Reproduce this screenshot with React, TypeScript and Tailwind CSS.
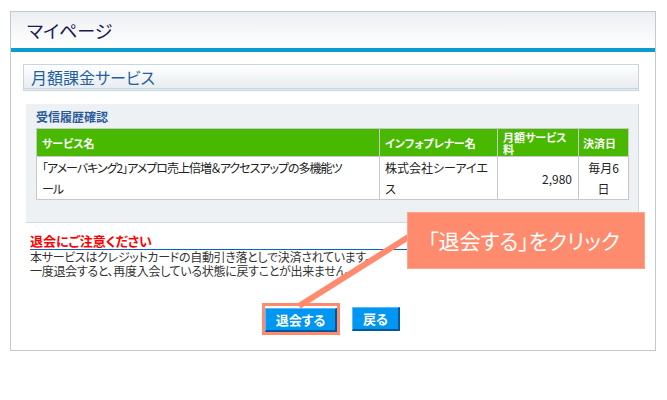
import React from 'react';

const jp = "[font-family:'Noto_Sans_CJK_JP',sans-serif] [font-feature-settings:'palt']";

const App: React.FC = () => {
  return (
    <div className={`relative w-[667px] h-[400px] bg-white overflow-hidden ${jp}`}>
      <div className="ml-[10px] mt-[11px] w-[646px] h-[340px] border border-[#c3c8cd]">
        {/* page title */}
        <div className="h-[36px] flex items-center pl-[16px] bg-gradient-to-b from-[#eceff2] to-white">
          <span className="text-[18px] text-[#1a1a50]">マイページ</span>
        </div>
        <div className="h-[4px] bg-[#0a9ccf]" />

        <div className="pl-[12px] pr-[16px] pt-[12px]">
          {/* section heading */}
          <div className="h-[27px] border border-[#c6d6e0] bg-gradient-to-b from-white to-[#e6ebef] flex flex-col">
            <div className="flex-1 flex items-center pl-[7px] text-[16px] text-[#1f5f9f] leading-none">
              月額課金サービス
            </div>
            <div className="h-[1px] bg-[#c6d6e0] mb-[1px]" />
          </div>

          {/* history box */}
          <div className="ml-[3px] mt-[13px] bg-[#edf1f4] border-r border-b border-[#d3d8dc] pl-[10px] pr-[11px] pt-[6px] pb-[22px]">
            <div className="text-[12px] font-bold text-[#2a5a9a] leading-[14px] mb-[4px]">受信履歴確認</div>
            <table className="w-[592px] border-collapse table-fixed text-[12px] text-[#222]">
              <colgroup>
                <col className="w-[343px]" />
                <col className="w-[118px]" />
                <col className="w-[81px]" />
                <col className="w-[50px]" />
              </colgroup>
              <thead>
                <tr className="h-[28px] bg-[#48b800] text-white text-[11px] font-bold leading-[12px]">
                  <th className="border border-[#c8c8c8] text-left px-[5px] font-bold">サービス名</th>
                  <th className="border border-[#c8c8c8] text-left px-[5px] font-bold">インフォプレナー名</th>
                  <th className="border border-[#c8c8c8] text-left px-[5px] align-top pt-[2px] font-bold">月額サービス料</th>
                  <th className="border border-[#c8c8c8] text-left px-[4px] font-bold">決済日</th>
                </tr>
              </thead>
              <tbody className="bg-white leading-[21px]">
                <tr className="h-[41px]">
                  <td className="border border-[#c8c8c8] px-[5px] tracking-[-1px]">
                    「アメーバキング2」アメプロ売上倍増＆アクセスアップの多機能ツ<br />ール
                  </td>
                  <td className="border border-[#c8c8c8] px-[5px]">
                    株式会社シーアイエ<br />ス
                  </td>
                  <td className="border border-[#c8c8c8] px-[6px] text-right">2,980</td>
                  <td className="border border-[#c8c8c8] text-center">
                    毎月6<br />日
                  </td>
                </tr>
              </tbody>
            </table>
          </div>

          {/* notice */}
          <div className="ml-[7px] mt-[11px]">
            <div className="text-[13px] font-bold text-[#ff0000] leading-[14px] border-b border-[#1060c0] pb-[1px]">
              退会にご注意ください
            </div>
            <div className="text-[12px] text-[#333] leading-[14px] tracking-[-0.3px]">
              <p>本サービスはクレジットカードの自動引き落としで決済されています。</p>
              <p>一度退会すると、再度入会している状態に戻すことが出来ません。</p>
            </div>
          </div>

          {/* buttons */}
          <div className="mt-[25px] flex justify-center items-center gap-[12px]">
            <div className="border-[3px] border-[#ff8a6e]">
              <button className="w-[72px] h-[24px] bg-[#0096f2] text-white text-[13px] font-bold border-t border-l border-[#5ab8ff] border-r-2 border-b-2 border-r-[#00599a] border-b-[#00599a]">
                退会する
              </button>
            </div>
            <button className="w-[48px] h-[24px] bg-[#0096f2] text-white text-[13px] font-bold border-t border-l border-[#5ab8ff] border-r-2 border-b-2 border-r-[#00599a] border-b-[#00599a]">
              戻る
            </button>
          </div>
        </div>
      </div>

      {/* annotation */}
      <svg className="absolute inset-0" width="667" height="400">
        <line x1="410" y1="236" x2="299" y2="306" stroke="#ff8a6e" strokeWidth="6" />
      </svg>
      <div className="absolute left-[407px] top-[212px] w-[238px] h-[57px] bg-[#ff8b6e] border border-[#ffa58c] flex items-center pl-[20px]">
        <span className="text-white text-[21px] leading-none">「退会する」をクリック</span>
      </div>
    </div>
  );
};

export default App;
